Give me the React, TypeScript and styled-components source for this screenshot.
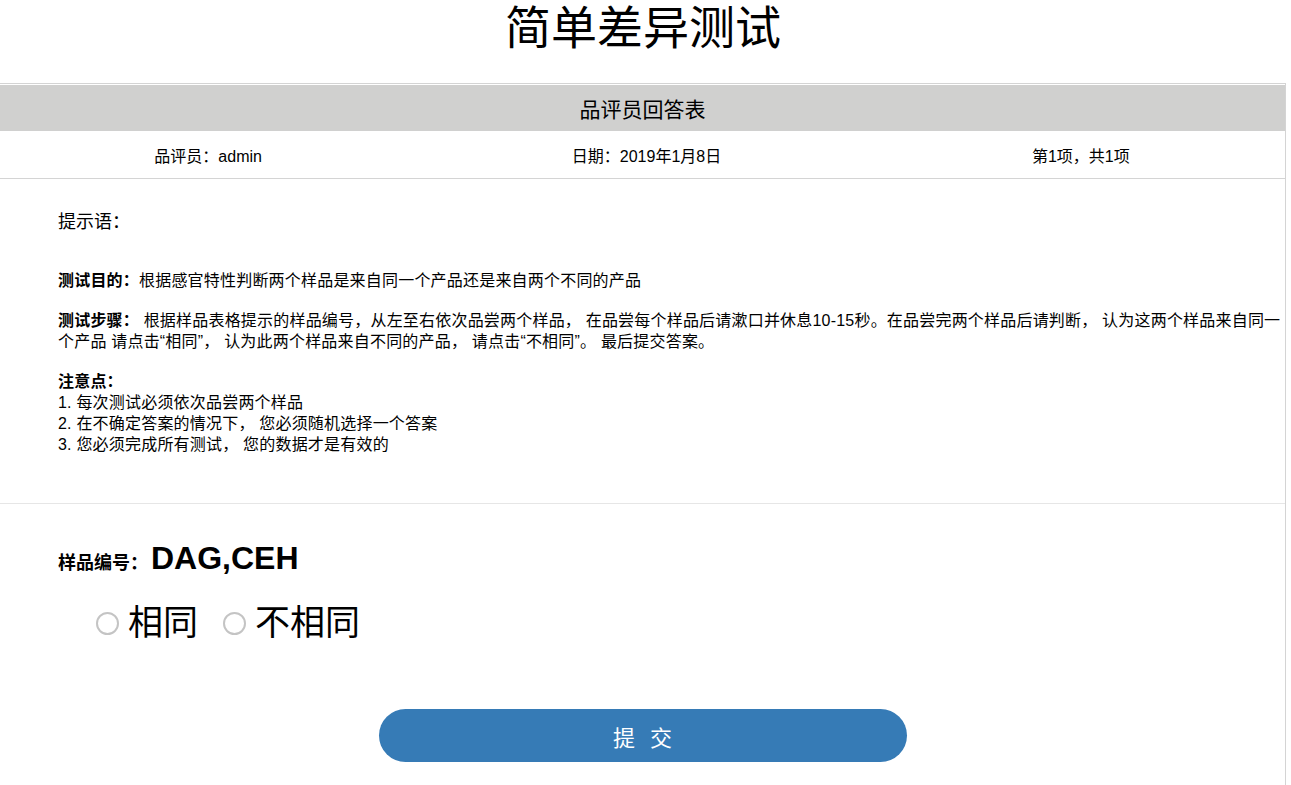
import React, {useState} from 'react';
import styled, {createGlobalStyle} from 'styled-components';

const GlobalStyle = createGlobalStyle`
  html, body {
    margin: 0;
    padding: 0;
    background: #ffffff;
  }
  body {
    font-family: "Liberation Sans", "Noto Sans CJK SC", sans-serif;
    color: #000000;
  }
`;

const Page = styled.div`
  width: 1286px;
`;

const Title = styled.h1`
  margin: 0;
  padding-bottom: 27px;
  height: 56px;
  line-height: 56px;
  font-size: 46px;
  font-weight: 400;
  text-align: center;
`;

const Sheet = styled.div`
  border-top: 1px solid #d4d4d4;
  border-right: 1px solid #d4d4d4;
  padding-top: 1px;
`;

const SheetHeader = styled.div`
  height: 46px;
  background: #d0d0cf;
  display: flex;
  align-items: center;
  justify-content: center;
  font-size: 21px;
`;

const InfoRow = styled.div`
  display: grid;
  grid-template-columns: 1fr 1fr 1fr;
  height: 47px;
  align-items: center;
  border-bottom: 1px solid #d4d4d4;
  font-size: 16px;
`;

const InfoCell = styled.div<{shift?: number}>`
  text-align: center;
  transform: translateX(${p => p.shift ?? 0}px);
`;

const Intro = styled.section`
  padding: 31px 4px 48px 58px;
  border-bottom: 1px solid #e6e6e6;
`;

const Prompt = styled.div`
  font-size: 18px;
  line-height: 24px;
  margin-bottom: 36px;
`;

const Para = styled.p`
  margin: 0 0 19px;
  font-size: 16px;
  line-height: 21px;
  letter-spacing: 0.2px;

  &:last-child {
    margin-bottom: 0;
  }
`;

const Strong = styled.b`
  font-weight: 700;
`;

const Answer = styled.section`
  padding: 36px 0 0 58px;
`;

const SampleLine = styled.div`
  display: flex;
  align-items: baseline;
  gap: 3px;
`;

const SampleLabel = styled.span`
  font-size: 18px;
  font-weight: 700;
`;

const SampleCode = styled.span`
  font-size: 32px;
  font-weight: 700;
`;

const Choices = styled.div`
  display: flex;
  align-items: center;
  gap: 25px;
  margin: 24px 0 0 38px;
`;

const Choice = styled.label`
  display: flex;
  align-items: center;
  gap: 9px;
  font-size: 35px;
  line-height: 44px;
  cursor: pointer;
`;

const Radio = styled.span<{checked: boolean}>`
  width: 23px;
  height: 23px;
  border-radius: 50%;
  border: 2px solid #c4c4c4;
  box-sizing: border-box;
  display: flex;
  align-items: center;
  justify-content: center;

  &::after {
    content: '';
    width: 11px;
    height: 11px;
    border-radius: 50%;
    background: ${p => (p.checked ? '#337ab7' : 'transparent')};
  }
`;

const Footer = styled.div`
  display: flex;
  justify-content: center;
  padding: 64px 0 40px;
`;

const SubmitButton = styled.button`
  width: 528px;
  height: 53px;
  border: none;
  border-radius: 27px;
  background: #367bb6;
  color: #ffffff;
  font-family: "Liberation Sans", "Noto Sans CJK SC", sans-serif;
  font-size: 22px;
  letter-spacing: 15px;
  text-indent: 15px;
  cursor: pointer;
`;

const options = ['相同', '不相同'];

export default function App() {
  const [choice, setChoice] = useState<string | null>(null);

  return (
    <Page>
      <GlobalStyle />
      <Title>简单差异测试</Title>
      <Sheet>
        <SheetHeader>品评员回答表</SheetHeader>
        <InfoRow>
          <InfoCell shift={-6}>品评员：admin</InfoCell>
          <InfoCell shift={4}>日期：2019年1月8日</InfoCell>
          <InfoCell shift={10}>第1项，共1项</InfoCell>
        </InfoRow>
        <Intro>
          <Prompt>提示语：</Prompt>
          <Para>
            <Strong>测试目的：</Strong>根据感官特性判断两个样品是来自同一个产品还是来自两个不同的产品
          </Para>
          <Para>
            <Strong>测试步骤：</Strong> 根据样品表格提示的样品编号，从左至右依次品尝两个样品， 在品尝每个样品后请漱口并休息10-15秒。在品尝完两个样品后请判断， 认为这两个样品来自同一个产品 请点击“相同”， 认为此两个样品来自不同的产品， 请点击“不相同”。 最后提交答案。
          </Para>
          <Para>
            <Strong>注意点：</Strong>
            <br />
            1. 每次测试必须依次品尝两个样品
            <br />
            2. 在不确定答案的情况下， 您必须随机选择一个答案
            <br />
            3. 您必须完成所有测试， 您的数据才是有效的
          </Para>
        </Intro>
        <Answer>
          <SampleLine>
            <SampleLabel>样品编号：</SampleLabel>
            <SampleCode>DAG,CEH</SampleCode>
          </SampleLine>
          <Choices>
            {options.map(opt => (
              <Choice key={opt} onClick={() => setChoice(opt)}>
                <Radio checked={choice === opt} />
                {opt}
              </Choice>
            ))}
          </Choices>
        </Answer>
        <Footer>
          <SubmitButton type="button">提交</SubmitButton>
        </Footer>
      </Sheet>
    </Page>
  );
}
